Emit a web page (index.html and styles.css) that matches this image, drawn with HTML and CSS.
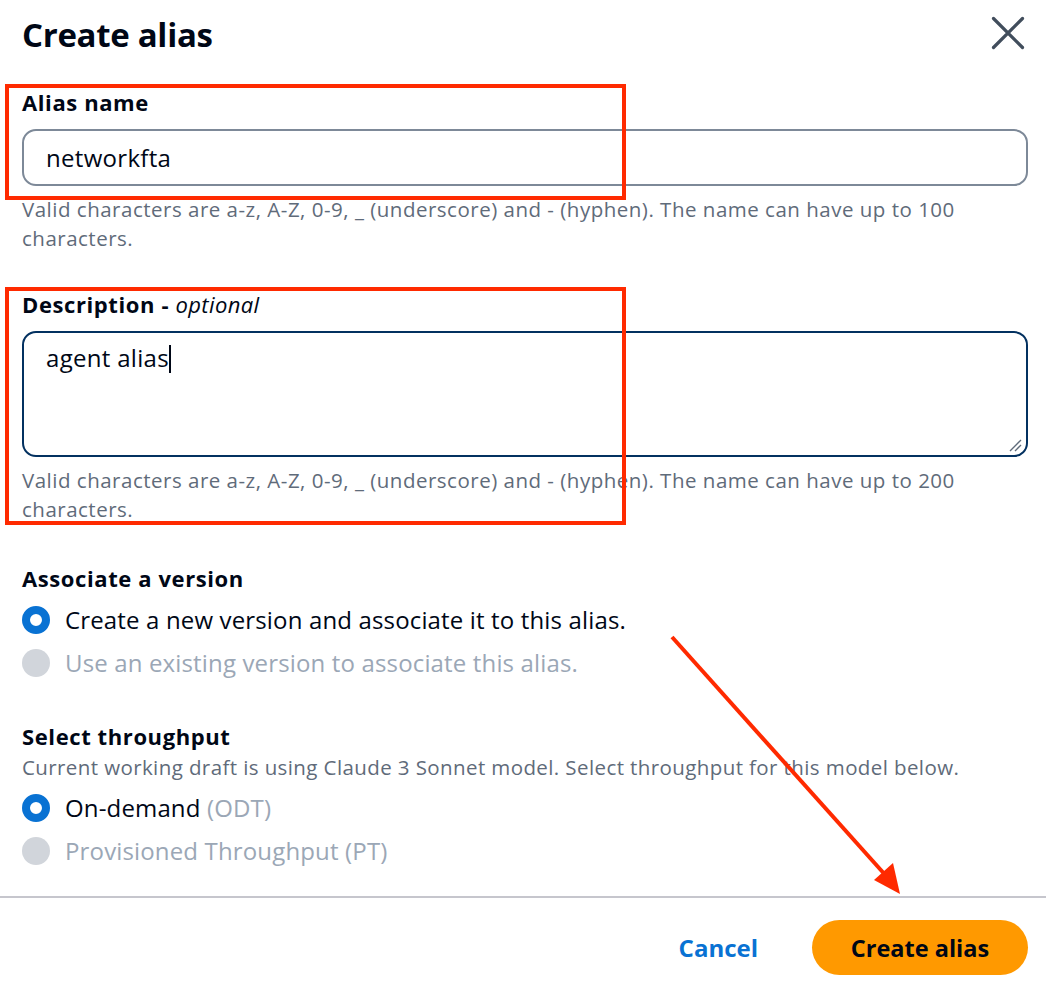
FILE: index.html
```html
<!DOCTYPE html>
<html lang="en">
<head>
<meta charset="utf-8">
<title>Create alias</title>
<link rel="stylesheet" href="styles.css">
</head>
<body>
<div class="modal">
  <header class="head">
    <h1 class="title">Create alias</h1>
    <button class="close" aria-label="Close">
      <svg width="34" height="34" viewBox="0 0 34 34"><path d="M2.5 2.5 L31.5 31.5 M31.5 2.5 L2.5 31.5" stroke="#414d5c" stroke-width="3.2" stroke-linecap="round" fill="none"/></svg>
    </button>
  </header>

  <main class="content">
    <div class="field">
      <label class="label">Alias name</label>
      <div class="input">networkfta</div>
      <p class="hint">Valid characters are a-z, A-Z, 0-9, _ (underscore) and - (hyphen). The name can have up to 100 characters.</p>
    </div>

    <div class="field field-desc">
      <label class="label">Description - <em>optional</em></label>
      <div class="textarea"><span>agent alias</span><span class="caret"></span>
        <svg class="grip" width="14" height="14" viewBox="0 0 14 14"><path d="M2 13 L13 2 M7 13 L13 7" stroke="#5f6b7a" stroke-width="1.4"/></svg>
      </div>
      <p class="hint">Valid characters are a-z, A-Z, 0-9, _ (underscore) and - (hyphen). The name can have up to 200 characters.</p>
    </div>

    <section class="group group-version">
      <h2 class="label">Associate a version</h2>
      <div class="radios">
        <div class="radio"><span class="dot on"></span><span>Create a new version and associate it to this alias.</span></div>
        <div class="radio disabled"><span class="dot"></span><span>Use an existing version to associate this alias.</span></div>
      </div>
    </section>

    <section class="group group-tp">
      <h2 class="label">Select throughput</h2>
      <p class="sub">Current working draft is using Claude 3 Sonnet model. Select throughput for this model below.</p>
      <div class="radios">
        <div class="radio"><span class="dot on"></span><span>On-demand <span class="muted">(ODT)</span></span></div>
        <div class="radio disabled"><span class="dot"></span><span>Provisioned Throughput (PT)</span></div>
      </div>
    </section>
  </main>

  <footer class="foot">
    <button class="link">Cancel</button>
    <button class="primary">Create alias</button>
  </footer>

  <div class="mark mark-1"></div>
  <div class="mark mark-2"></div>
  <svg class="arrow" width="1046" height="984" viewBox="0 0 1046 984">
    <line x1="672" y1="637" x2="888" y2="878" stroke="#ff2a00" stroke-width="4"/>
    <polygon points="900,894 874,880 893,863" fill="#ff2a00"/>
  </svg>
</div>
</body>
</html>
```

FILE: styles.css
```css
* { box-sizing: border-box; }
html, body { margin: 0; padding: 0; background: #ffffff; }
body {
  font-family: "Open Sans", "Noto Sans", sans-serif;
  color: #000716;
  width: 1046px;
  height: 984px;
  overflow: hidden;
}
.modal {
  position: relative;
  width: 1046px;
  height: 984px;
}
.head {
  display: flex;
  justify-content: space-between;
  align-items: flex-start;
  padding: 12px 21px 0 22px;
  height: 87px;
}
.title {
  margin: 0;
  font-size: 33px;
  font-weight: 700;
  line-height: 46px;
  letter-spacing: -0.3px;
}
.close {
  border: 0;
  background: none;
  padding: 0;
  margin-top: 4px;
  width: 34px;
  height: 34px;
  cursor: pointer;
}
.close svg { display: block; }
.content {
  padding: 0 18px 0 22px;
}
.label {
  display: block;
  margin: 0;
  font-size: 22px;
  font-weight: 700;
  line-height: 30px;
  letter-spacing: 0.6px;
}
.label em { font-weight: 400; font-style: italic; letter-spacing: 0.4px; }
.input {
  margin-top: 12px;
  height: 57px;
  border: 2px solid #7d8998;
  border-radius: 14px;
  padding: 0 22px;
  font-size: 24px;
  line-height: 53px;
  letter-spacing: 0.3px;
}
.hint {
  margin: 9px 0 0;
  font-size: 20.5px;
  line-height: 28.5px;
  letter-spacing: 0.5px;
  color: #5f6b7a;
}
.field-desc { margin-top: 37px; }
.textarea {
  position: relative;
  margin-top: 12px;
  height: 126px;
  border: 2px solid #033160;
  border-radius: 14px;
  padding: 7px 22px;
  font-size: 24px;
  line-height: 36px;
  letter-spacing: 0.3px;
}
.caret {
  display: inline-block;
  width: 2px;
  height: 28px;
  background: #000716;
  vertical-align: -6px;
}
.grip { position: absolute; right: 4px; bottom: 3px; }
.group-version { margin-top: 40px; }
.group-tp { margin-top: 37px; }
.radios { margin-top: 5px; }
.radio {
  display: flex;
  align-items: center;
  gap: 15px;
  font-size: 24px;
  line-height: 43px;
  letter-spacing: 0.15px;
}
.dot {
  width: 28px;
  height: 28px;
  border-radius: 50%;
  background: #d1d5db;
  flex: none;
}
.dot.on {
  background: #ffffff;
  border: 8px solid #0972d3;
}
.radio.disabled { color: #9ba7b6; }
.muted { color: #9ba7b6; }
.sub {
  margin: 2px 0 0;
  font-size: 20.5px;
  line-height: 28px;
  letter-spacing: 0.4px;
  color: #5f6b7a;
}
.foot {
  position: absolute;
  left: 0;
  right: 0;
  top: 896px;
  height: 88px;
  border-top: 2px solid #c6c6cd;
  display: flex;
  justify-content: flex-end;
  align-items: flex-start;
  gap: 54px;
  padding: 22px 18px 0 0;
}
.link {
  border: 0;
  background: none;
  color: #0972d3;
  font-family: inherit;
  font-size: 24px;
  font-weight: 700;
  line-height: 56px;
  padding: 0;
}
.primary {
  border: 0;
  background: #ff9900;
  color: #000716;
  font-family: inherit;
  font-size: 23.5px;
  font-weight: 700;
  width: 216px;
  height: 55px;
  border-radius: 28px;
}
.mark {
  position: absolute;
  border: 4px solid #ff2a00;
  pointer-events: none;
}
.mark-1 { left: 5px; top: 84px; width: 621px; height: 116px; }
.mark-2 { left: 5px; top: 287px; width: 621px; height: 238px; }
.arrow { position: absolute; left: 0; top: 0; pointer-events: none; }
```
